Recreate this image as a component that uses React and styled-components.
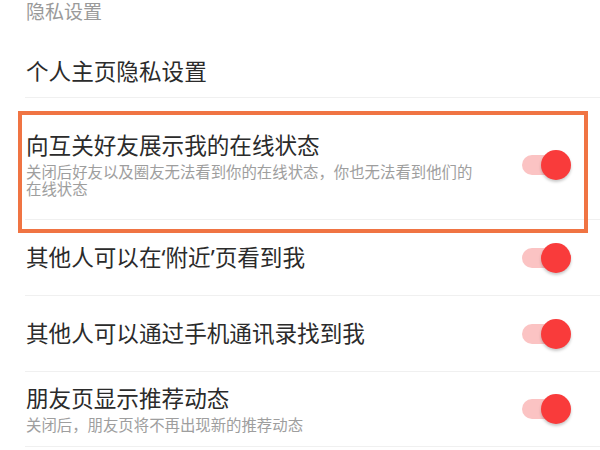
import React, { useState } from 'react';
import styled, { createGlobalStyle } from 'styled-components';

const GlobalStyle = createGlobalStyle`
  html, body {
    margin: 0;
    padding: 0;
    background: #fff;
  }
  body {
    font-family: "Noto Sans", "Noto Sans CJK SC", sans-serif;
    color: #333;
  }
`;

const Page = styled.div`
  width: 600px;
  height: 450px;
  overflow: hidden;
  background: #fff;
`;

const SectionTitle = styled.div`
  height: 47px;
  padding-left: 26px;
  font-size: 19px;
  line-height: 25px;
  color: #9a9a9a;
  box-sizing: border-box;
`;

const List = styled.div`
  padding-left: 25px;
`;

const Row = styled.div`
  position: relative;
  display: flex;
  align-items: center;
  justify-content: space-between;
  box-sizing: border-box;
  min-height: ${({ $height }) => $height}px;
  padding: ${({ $pad }) => $pad || '0'};
  padding-left: 1px;
  padding-right: 29px;
  border-bottom: 1px solid #f0f0f0;
`;

const Texts = styled.div`
  display: flex;
  flex-direction: column;
`;

const Title = styled.div`
  font-size: 22.6px;
  line-height: 30px;
  color: #2b2b2b;
  white-space: nowrap;
`;

const Sub = styled.div`
  margin-top: 3px;
  font-size: 15.4px;
  line-height: 17px;
  color: #9e9e9e;
  max-width: 460px;
`;

const Highlight = styled.div`
  position: absolute;
  left: -7px;
  right: 12px;
  top: 13px;
  bottom: -14px;
  border: 4px solid #f07443;
  pointer-events: none;
`;

const Switch = styled.button`
  position: relative;
  flex: none;
  width: 49px;
  height: 30px;
  padding: 0;
  border: none;
  background: transparent;
  cursor: pointer;
`;

const Track = styled.span`
  position: absolute;
  left: 0;
  top: 5px;
  width: 38px;
  height: 20px;
  border-radius: 10px;
  background: ${({ $on }) => ($on ? '#fbc3c3' : '#d8d8d8')};
`;

const Knob = styled.span`
  position: absolute;
  top: 0;
  left: ${({ $on }) => ($on ? '19px' : '0')};
  width: 30px;
  height: 30px;
  border-radius: 50%;
  background: ${({ $on }) => ($on ? '#f93b3b' : '#f5f5f5')};
  box-shadow: 0 2px 3px rgba(0, 0, 0, 0.22);
`;

const Toggle = ({ initial = true }) => {
  const [on, setOn] = useState(initial);
  return (
    <Switch onClick={() => setOn(!on)} aria-pressed={on}>
      <Track $on={on} />
      <Knob $on={on} />
    </Switch>
  );
};

const rows = [
  {
    title: '向互关好友展示我的在线状态',
    sub: '关闭后好友以及圈友无法看到你的在线状态，你也无法看到他们的在线状态',
    height: 120,
    pad: '33px 0 21px',
    highlight: true,
  },
  { title: '其他人可以在‘附近’页看到我', height: 76 },
  { title: '其他人可以通过手机通讯录找到我', height: 76 },
  { title: '朋友页显示推荐动态', sub: '关闭后，朋友页将不再出现新的推荐动态', height: 75 },
];

export default function App() {
  return (
    <Page>
      <GlobalStyle />
      <SectionTitle>隐私设置</SectionTitle>
      <List>
        <Row $height={51}>
          <Title>个人主页隐私设置</Title>
        </Row>
        {rows.map((r) => (
          <Row key={r.title} $height={r.height} $pad={r.pad}>
            <Texts>
              <Title>{r.title}</Title>
              {r.sub && <Sub>{r.sub}</Sub>}
            </Texts>
            <Toggle />
            {r.highlight && <Highlight />}
          </Row>
        ))}
      </List>
    </Page>
  );
}
